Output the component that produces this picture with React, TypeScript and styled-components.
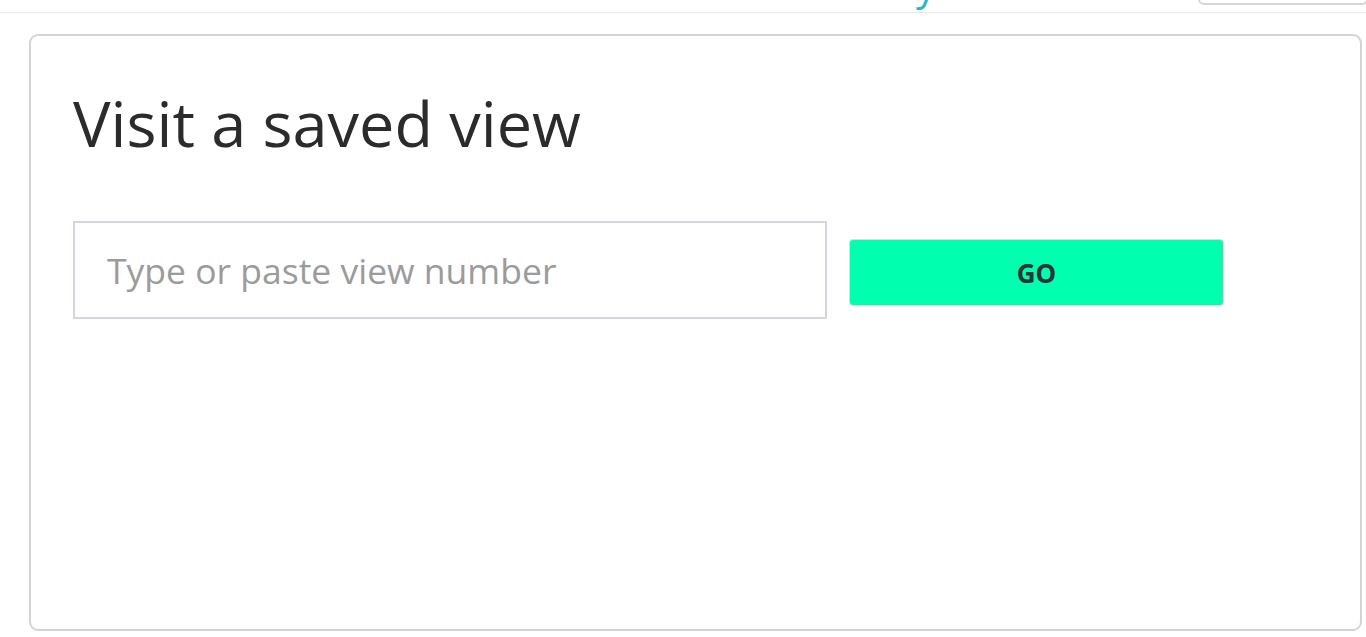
import React from "react";
import styled, { createGlobalStyle } from "styled-components";

const GlobalStyle = createGlobalStyle`
  html, body {
    margin: 0;
    padding: 0;
    background: #fff;
    font-family: "Open Sans", "Liberation Sans", sans-serif;
    color: #333;
  }
  * {
    box-sizing: border-box;
  }
`;

const TopBar = styled.header`
  height: 13px;
  border-bottom: 1px solid #e8e8e8;
  overflow: hidden;
  display: flex;
  align-items: flex-end;
  justify-content: flex-end;
`;

const NavLink = styled.span`
  font-size: 40px;
  line-height: 40px;
  color: #29b6c6;
  margin-right: 262px;
  margin-bottom: 7px;
  white-space: nowrap;
`;

const NavBox = styled.div`
  width: 170px;
  height: 40px;
  margin-bottom: 7px;
  border: 2px solid #d6d6d6;
  border-radius: 6px;
  margin-right: -2px;
`;

const Card = styled.section`
  margin: 21px 4px 6px 29px;
  height: 597px;
  border: 2px solid #d4d4d4;
  border-radius: 9px;
  padding: 45px 42px;
`;

const Title = styled.h1`
  margin: 0;
  font-size: 63px;
  font-weight: 400;
  line-height: 84px;
  color: #2b2b2b;
`;

const Row = styled.div`
  display: flex;
  align-items: center;
  gap: 22px;
  margin-top: 56px;
`;

const Input = styled.input`
  width: 754px;
  height: 98px;
  border: 2px solid #d3d6e0;
  border-radius: 0;
  padding: 0 32px;
  font-family: inherit;
  font-size: 35.5px;
  color: #333;
  outline: none;
  &::placeholder {
    color: #9b9b9b;
  }
`;

const GoButton = styled.button`
  width: 375px;
  height: 67px;
  margin-top: 5px;
  border: 1px solid #e8d6dc;
  border-radius: 4px;
  background: #00ffae;
  font-family: inherit;
  font-size: 26px;
  font-weight: 700;
  color: #333;
  cursor: pointer;
`;

export default function App() {
  return (
    <>
      <GlobalStyle />
      <TopBar>
        <NavLink>Gallery</NavLink>
        <NavBox />
      </TopBar>
      <Card>
        <Title>Visit a saved view</Title>
        <Row>
          <Input placeholder="Type or paste view number" />
          <GoButton>GO</GoButton>
        </Row>
      </Card>
    </>
  );
}
